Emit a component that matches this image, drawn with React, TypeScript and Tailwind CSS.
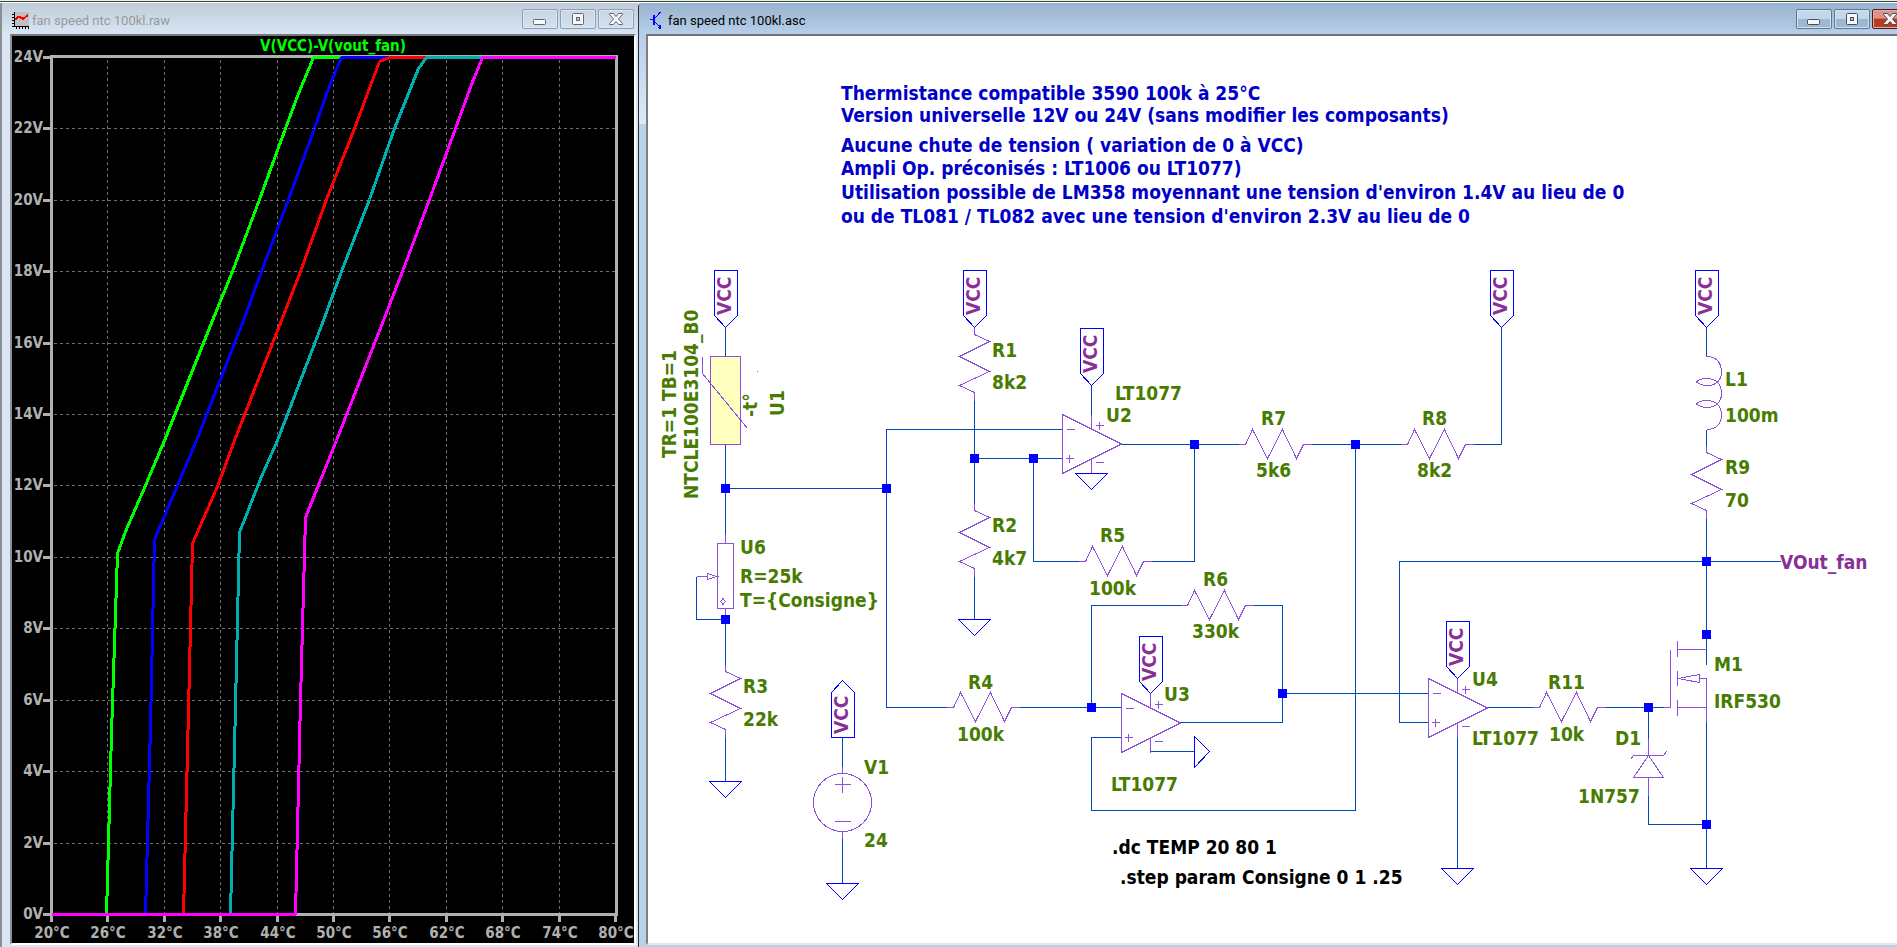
import React from 'react';

type Point = [number, number];

/* ---------- Window chrome ---------- */

type WindowControlsProps = {
  active: boolean;
};

const WindowControls: React.FC<WindowControlsProps> = ({ active }) => {
  const base = 'flex h-5 w-9 shrink-0 items-center justify-center rounded-[2px] border';
  const plain = active
    ? 'border-[#5f7792] bg-linear-to-b from-[#c3d6ea] from-50% to-[#9db8d2] to-50% shadow-[inset_0_0_0_1px_#d3e2f1]'
    : 'border-[#8d9eb6] bg-linear-to-b from-[#c9d6e4] to-[#d3e0ed] shadow-[inset_0_0_0_1px_#dbe6f1]';
  const close = active
    ? 'border-[#4a1a20] bg-linear-to-b from-[#dd9488] from-45% to-[#bb3a22] to-50% shadow-[inset_0_0_0_1px_#e8aba0]'
    : plain;
  const outline = active ? '#434d5e' : '#5d6878';

  return (
    <div className="flex gap-0.5">
      <button type="button" aria-label="Minimize" className={`${base} ${plain}`}>
        <svg width="16" height="16" viewBox="0 0 16 16">
          <rect x="1.5" y="8.5" width="12" height="5" rx="1" fill="#f7f7f7" stroke={outline} />
        </svg>
      </button>
      <button type="button" aria-label="Restore" className={`${base} ${plain}`}>
        <svg width="16" height="16" viewBox="0 0 16 16">
          <rect x="2.5" y="2.5" width="11" height="11" rx="1" fill="#f7f7f7" stroke={outline} />
          <rect x="6.5" y="6.5" width="3" height="3" fill="#b7c9dc" stroke={outline} />
        </svg>
      </button>
      <button type="button" aria-label="Close" className={`${base} ${close}`}>
        <svg width="16" height="16" viewBox="0 0 16 16">
          <path
            d="M1.500 2.500H5.500L8 5.500L10.500 2.500H14.500V3.500L10.500 8L14.500 12.500V13.500H10.500L8 10.500L5.500 13.500H1.500V12.500L5.500 8L1.500 3.500Z"
            fill="#f7f7f7"
            stroke={outline}
            strokeLinejoin="round"
          />
        </svg>
      </button>
    </div>
  );
};

const PlotIcon = () => (
  <svg width="17" height="17" viewBox="0 0 17 17" shapeRendering="crispEdges">
    <rect x="2" y="0" width="15" height="14" fill="#c0c0c0" />
    <path d="M2.500 0V14.500H17" fill="none" stroke="#000" />
    <path d="M0 2.500H2M0 5.500H2M0 8.500H2M0 11.500H2M0 14.500H2M4.500 14V17M7.500 14V17M10.500 14V17M13.500 14V17M16.500 14V17" stroke="#000" />
    <path d="M3 8L6 5H8L11 7L16 3" fill="none" stroke="#f00" strokeWidth="2" />
  </svg>
);

const TransistorIcon = () => (
  <svg width="12" height="17" viewBox="0 0 12 17" shapeRendering="crispEdges">
    <path d="M0 7.500H4M5 6L10.500 0M5 10L10.500 15" fill="none" stroke="#00f" />
    <path d="M4 3V13" stroke="#00f" strokeWidth="2" />
    <path d="M11 17V12L7 16Z" fill="#00f" />
  </svg>
);

/* ---------- Waveform plot ---------- */

const traces: { color: string; points: Point[] }[] = [
  {
    color: '#00ff00',
    points: [[52, 914], [107, 914], [112, 733], [118, 553], [126, 531], [146, 485], [165, 440], [213, 320], [233, 271], [260, 199], [286, 128], [299, 93], [314, 58], [616, 58]]
  },
  {
    color: '#0000ff',
    points: [[52, 914], [146, 914], [151, 725], [155, 539], [178, 485], [197, 440], [244, 320], [262, 271], [289, 199], [315, 128], [329, 88], [342, 58], [616, 58]]
  },
  {
    color: '#ff0000',
    points: [[52, 914], [184, 914], [189, 710], [193, 543], [218, 486], [235, 440], [282, 320], [301, 271], [327, 199], [355, 128], [368, 93], [380, 61], [390, 58], [616, 58]]
  },
  {
    color: '#00b0b0',
    points: [[52, 914], [231, 914], [236, 705], [240, 532], [262, 476], [278, 440], [324, 320], [342, 271], [370, 199], [395, 128], [419, 68], [427, 58], [616, 58]]
  },
  {
    color: '#ff00ff',
    points: [[52, 914], [296, 914], [301, 700], [306, 517], [320, 482], [337, 440], [384, 320], [403, 271], [430, 199], [456, 128], [472, 84], [483, 58], [616, 58]]
  }
];

const xTicks = [52, 108, 165, 221, 278, 334, 390, 447, 503, 560, 616];
const yTicks = [57, 128, 200, 271, 343, 414, 485, 557, 628, 700, 771, 843, 914];

const WaveformPlot = () => (
  <svg
    viewBox="12 36 622 907"
    preserveAspectRatio="xMinYMin meet"
    className="block h-full w-full font-['DejaVu_Sans_Condensed','DejaVu_Sans',sans-serif] text-[15px] font-bold"
  >
    <g shapeRendering="crispEdges">
      <g stroke="#707070" strokeDasharray="3 3">
        {xTicks.slice(1, -1).map((x) => (
          <path key={x} d={`M${x - 0.5} 60V913`} />
        ))}
        {yTicks.slice(1, -1).map((y) => (
          <path key={y} d={`M54 ${y + 0.5}H615`} />
        ))}
      </g>
      <g fill="none" stroke="#b0b0b0" strokeWidth="3">
        <rect x="51.500" y="56.500" width="565" height="858" />
        {xTicks.map((x) => (
          <path key={x} d={`M${x - 0.5} 916V922`} />
        ))}
        {yTicks.map((y) => (
          <path key={y} d={`M43 ${y + 0.5}H50`} />
        ))}
      </g>
      {traces.map((trace) => (
        <polyline
          key={trace.color}
          points={trace.points.map(([x, y]) => `${x - 0.5},${y + (y < 60 ? -0.5 : 0.5)}`).join(' ')}
          fill="none"
          stroke={trace.color}
          strokeWidth="3"
          strokeLinejoin="bevel"
        />
      ))}
    </g>
    <text x="333" y="51" textAnchor="middle" fill="#00ff00">V(VCC)-V(vout_fan)</text>
    <g fill="#b0b0b0">
      {yTicks.map((y, i) => (
        <text key={y} x="43" y={y + 5} textAnchor="end">{24 - 2 * i}V</text>
      ))}
      {xTicks.map((x, i) => (
        <text key={x} x={x} y="938" textAnchor="middle">{20 + 6 * i}°C</text>
      ))}
    </g>
  </svg>
);

/* ---------- Schematic symbols ---------- */

const WIRE = '#0048b8';
const PART = '#8c50dc';
const FLAG = '#0000ff';

type SymbolProps = {
  x: number;
  y: number;
};

// vertical resistor, pins at y and y + 73
const ResistorV: React.FC<SymbolProps> = ({ x, y }) => (
  <path d={`M${x} ${y}v7l15 7l-30 15l30 15l-30 14l15 7v8`} />
);

// horizontal resistor, pins at x and x + 73
const ResistorH: React.FC<SymbolProps> = ({ x, y }) => (
  <path d={`M${x} ${y}h7l7 -15l15 29l15 -29l14 29l7 -14h8`} />
);

const OpAmp: React.FC<SymbolProps> = ({ x, y }) => (
  <g>
    <path d={`M${x} ${y}v59l59 -29.500Z`} />
    <path d={`M${x + 29} ${y}v15M${x + 29} ${y + 44}v15`} />
    <path d={`M${x + 4} ${y + 15}h8M${x + 3} ${y + 44}h8m-4 -4v8`} />
    <path d={`M${x + 33} ${y + 11}h8m-4 -4v8M${x + 33} ${y + 48}h8`} />
  </g>
);

const Ground: React.FC<SymbolProps> = ({ x, y }) => (
  <path d={`M${x - 16} ${y}h32l-16 16Z`} />
);

const Junction: React.FC<SymbolProps> = ({ x, y }) => (
  <rect x={x - 4.5} y={y - 4.5} width="9" height="9" />
);

// supply flag pointing down, y is its flat top edge
const VccFlag: React.FC<SymbolProps> = ({ x, y }) => (
  <path d={`M${x - 11} ${y}h23v45l-12 12l-11 -12Z`} />
);

type LabelProps = SymbolProps & {
  children: string;
  vertical?: boolean;
};

const Label: React.FC<LabelProps> = ({ x, y, children, vertical }) => (
  <text x={x} y={y} transform={vertical ? `rotate(-90 ${x} ${y})` : undefined}>{children}</text>
);

const comments: [number, string][] = [
  [100, 'Thermistance compatible 3590 100k à 25°C'],
  [122, 'Version universelle 12V ou 24V (sans modifier les composants)'],
  [152, 'Aucune chute de tension ( variation de 0 à VCC)'],
  [175, 'Ampli Op. préconisés : LT1006 ou LT1077)'],
  [199, "Utilisation possible de LM358 moyennant une tension d'environ 1.4V au lieu de 0"],
  [223, "ou de TL081 / TL082 avec une tension d'environ 2.3V au lieu de 0"]
];

const flags: Point[] = [
  [725.5, 270.5],
  [974.5, 270.5],
  [1091.5, 328.5],
  [1501.5, 270.5],
  [1706.5, 270.5],
  [1150.5, 636.5],
  [1457.5, 621.5]
];

const grounds: Point[] = [
  [725.5, 781.5],
  [974.5, 619.5],
  [1091.5, 473.5],
  [842.5, 883.5],
  [1457.5, 868.5],
  [1706.5, 868.5]
];

const junctions: Point[] = [
  [725.5, 488.5],
  [886.5, 488.5],
  [725.5, 619.5],
  [974.5, 458.5],
  [1033.5, 458.5],
  [1194.5, 444.5],
  [1355.5, 444.5],
  [1091.5, 707.5],
  [1282.5, 693.5],
  [1648.5, 707.5],
  [1706.5, 561.5],
  [1706.5, 634.5],
  [1706.5, 824.5]
];

const wires = [
  'M725.5 327.5V356.5M725.5 444.5V533.5M725.5 488.5H886.5',
  'M696.5 576.5V619.5H725.5V664.5M725.5 737.5V781.5',
  'M1062.5 429.5H886.5V707.5H946.5M1019.5 707.5H1121.5',
  'M974.5 400.5V503.5M974.5 458.5H1062.5M974.5 576.5V619.5',
  'M1033.5 458.5V561.5H1078.5M1151.5 561.5H1194.5V444.5',
  'M1091.5 385.5V414.5M1121.5 444.5H1238.5M1311.5 444.5H1400.5',
  'M1473.5 444.5H1501.5V327.5',
  'M1355.5 444.5V810.5H1091.5V737.5H1121.5',
  'M1091.5 707.5V605.5H1180.5M1253.5 605.5H1282.5V722.5H1180.5',
  'M1282.5 693.5H1428.5M1428.5 722.5H1399.5V561.5H1780.5',
  'M1150.5 751.5H1194.5M842.5 737.5V767.5M842.5 838.5V883.5',
  'M1457.5 737.5V868.5M1487.5 707.5H1532.5M1605.5 707.5H1664.5',
  'M1706.5 327.5V356.5M1706.5 429.5V445.5M1706.5 518.5V664.5M1706.5 722.5V868.5',
  'M1648.5 707.5V738.5M1648.5 795.5V824.5H1706.5'
];

const partLabels: [number, number, string][] = [
  [992, 357, 'R1'],
  [992, 389, '8k2'],
  [992, 532, 'R2'],
  [992, 565, '4k7'],
  [740, 554, 'U6'],
  [740, 583, 'R=25k'],
  [740, 607, 'T={Consigne}'],
  [743, 693, 'R3'],
  [743, 726, '22k'],
  [864, 774, 'V1'],
  [864, 847, '24'],
  [968, 689, 'R4'],
  [957, 741, '100k'],
  [1100, 542, 'R5'],
  [1089, 595, '100k'],
  [1203, 586, 'R6'],
  [1192, 638, '330k'],
  [1261, 425, 'R7'],
  [1256, 477, '5k6'],
  [1422, 425, 'R8'],
  [1417, 477, '8k2'],
  [1115, 400, 'LT1077'],
  [1106, 422, 'U2'],
  [1164, 701, 'U3'],
  [1111, 791, 'LT1077'],
  [1472, 686, 'U4'],
  [1472, 745, 'LT1077'],
  [1548, 689, 'R11'],
  [1549, 741, '10k'],
  [1615, 745, 'D1'],
  [1578, 803, '1N757'],
  [1714, 671, 'M1'],
  [1714, 708, 'IRF530'],
  [1725, 386, 'L1'],
  [1725, 422, '100m'],
  [1725, 474, 'R9'],
  [1725, 507, '70']
];

const Schematic = () => (
  <svg
    viewBox="648 36 1263 907"
    preserveAspectRatio="xMinYMin meet"
    className="block h-full w-full font-['DejaVu_Sans_Condensed','DejaVu_Sans',sans-serif] text-[19px] font-bold"
  >
    <g shapeRendering="crispEdges" fill="none">
      <path d={wires.join('')} stroke={WIRE} />

      <g stroke={PART}>
        {/* U1 thermistor */}
        <rect x="710.500" y="356.500" width="30" height="88" fill="#ffffc0" />
        <path d="M702.500 357V373.500L747.500 428.500M757 371.500h1" />

        {/* U6 potentiometer */}
        <path d="M725.500 533.500V543.500M725.500 608.500V619.500M696.500 576.500H707.500" />
        <rect x="717.500" y="543.500" width="16" height="65" />
        <path d="M707.500 573.500V579.500L717 576.500Z" />
        <path d="M723 598.500L725.500 601.500L723 604.500L720.500 601.500Z" />

        <ResistorV x={974.5} y={327.5} />
        <ResistorV x={974.5} y={503.5} />
        <ResistorV x={725.5} y={664.5} />
        <ResistorV x={1706.5} y={445.5} />
        <ResistorH x={946.5} y={707.5} />
        <ResistorH x={1078.5} y={561.5} />
        <ResistorH x={1180.5} y={605.5} />
        <ResistorH x={1238.5} y={444.5} />
        <ResistorH x={1400.5} y={444.5} />
        <ResistorH x={1532.5} y={707.5} />

        <OpAmp x={1062.5} y={414.5} />
        <OpAmp x={1121.5} y={693.5} />
        <OpAmp x={1428.5} y={678.5} />

        {/* V1 source */}
        <circle cx="842.500" cy="802.500" r="29" />
        <path d="M842.500 767V773M842.500 832V839M834.500 784.500h16m-8 -8v16M834.500 821.500h16" />

        {/* L1 coil */}
        <path d="M1706.500 356.500C1716 356 1721.500 363 1721.500 372C1721.500 380 1716 386 1706.500 385.500C1702 386 1699 384 1696.500 382C1699 379 1702 378.500 1706.500 378.500C1716 378.500 1721.500 384 1721.500 393.500C1721.500 402 1716 407.500 1706.500 407.500C1702 407.500 1699 406 1696.500 404C1699 401 1702 400.500 1706.500 400.500C1716 400.500 1721.500 406 1721.500 415C1721.500 424 1716 429.500 1706.500 429.500" />

        {/* M1 mosfet */}
        <path d="M1664 707.500H1670.500V649.500M1677.500 641V657M1677.500 671V686M1677.500 700V716" />
        <path d="M1677.500 649.500H1706.500M1677.500 707.500H1706.500M1699.500 678.500H1706.500V722.500" />
        <path d="M1678 678.500L1699.500 674.500V682.500Z" />

        {/* D1 zener */}
        <path d="M1648.500 738.500V755.500M1648.500 777.500V795.500M1630.500 759.500L1633.500 755.500H1663.500L1666.500 751.500" />
        <path d="M1648.500 755.500L1633.500 777.500H1663.500Z" />
      </g>

      <g stroke={FLAG}>
        {flags.map(([x, y]) => (
          <VccFlag key={`${x}-${y}`} x={x} y={y} />
        ))}
        {grounds.map(([x, y]) => (
          <Ground key={`${x}-${y}`} x={x} y={y} />
        ))}
        <path d="M831.500 737.500h23v-45l-12 -12l-11 12Z" />
        <path d="M1194.500 736.500v31l15 -16Z" />
      </g>

      <g fill={FLAG}>
        {junctions.map(([x, y]) => (
          <Junction key={`${x}-${y}`} x={x} y={y} />
        ))}
      </g>
    </g>

    <g fill="#0000c8">
      {comments.map(([y, text]) => (
        <Label key={y} x={841} y={y}>{text}</Label>
      ))}
    </g>

    <g fill="#487c00">
      {partLabels.map(([x, y, text]) => (
        <Label key={`${x}-${y}`} x={x} y={y}>{text}</Label>
      ))}
      <Label x={676} y={458} vertical>TR=1 TB=1</Label>
      <Label x={698} y={499} vertical>NTCLE100E3104_B0</Label>
      <Label x={757} y={417} vertical>-t°</Label>
      <Label x={784} y={416} vertical>U1</Label>
    </g>

    <g fill="#883098">
      {flags.map(([x, y]) => (
        <Label key={`${x}-${y}`} x={x + 5.5} y={y + 44.5} vertical>VCC</Label>
      ))}
      <Label x={848} y={734} vertical>VCC</Label>
      <Label x={1780} y={569}>VOut_fan</Label>
    </g>

    <g fill="#000">
      <Label x={1112} y={854}>.dc TEMP 20 80 1</Label>
      <Label x={1120} y={884}>.step param Consigne 0 1 .25</Label>
    </g>
  </svg>
);

export default function App() {
  return (
    <div className="flex h-screen flex-col overflow-hidden bg-[#e8f0e8] pt-px font-[Roboto,sans-serif] text-[13px]">
      <div className="grid min-h-0 flex-1 grid-cols-[638fr_1259fr] border-t border-[#3c463c] bg-white pt-px">
        {/* Waveform window */}
        <section className="flex min-h-0 min-w-0 flex-col border-l-2 border-[#8a8f94] bg-[#dae6f3] pr-0.5 pb-0.5 pl-2">
          <header className="-mr-0.5 -ml-2 flex h-[31px] shrink-0 items-center justify-between bg-linear-to-b from-[#bfcddb] to-[#d8e5f2] pr-1 pl-2.5">
            <h1 className="flex items-center gap-[3px] pt-1 text-[#9a9a9a]">
              <PlotIcon />
              fan speed ntc 100kl.raw
            </h1>
            <WindowControls active={false} />
          </header>
          <div className="min-h-0 flex-1 overflow-hidden border-2 border-t-[#77797c] border-r-white border-b-white border-l-[#8e9296] bg-black">
            <WaveformPlot />
          </div>
        </section>

        {/* Schematic window, runs off the right edge of the desktop */}
        <section className="-mr-4 flex min-h-0 min-w-0 flex-col rounded-tl-[4px] border-l border-[#303030] bg-[#b9d1ea] pb-0.5">
          <header className="flex h-[31px] shrink-0 items-center justify-between rounded-tl-[4px] bg-linear-to-b from-[#98b3d0] to-[#b7cfe8] pr-[5px] pl-[11px]">
            <h1 className="flex items-center gap-1.5 pt-1 text-black">
              <TransistorIcon />
              fan speed ntc 100kl.asc
            </h1>
            <WindowControls active />
          </header>
          <div className="flex min-h-0 flex-1">
            <div className="w-[7px] shrink-0">
              <div className="h-[90px] bg-linear-to-b from-[#b7cfe8] to-[#dfe9f6]" />
            </div>
            <div className="min-w-0 flex-1 overflow-hidden border-t-2 border-b-2 border-l-2 border-t-[#6f7276] border-b-[#e6e6e6] border-l-[#7c7f82] bg-white">
              <Schematic />
            </div>
          </div>
        </section>
      </div>
    </div>
  );
}
